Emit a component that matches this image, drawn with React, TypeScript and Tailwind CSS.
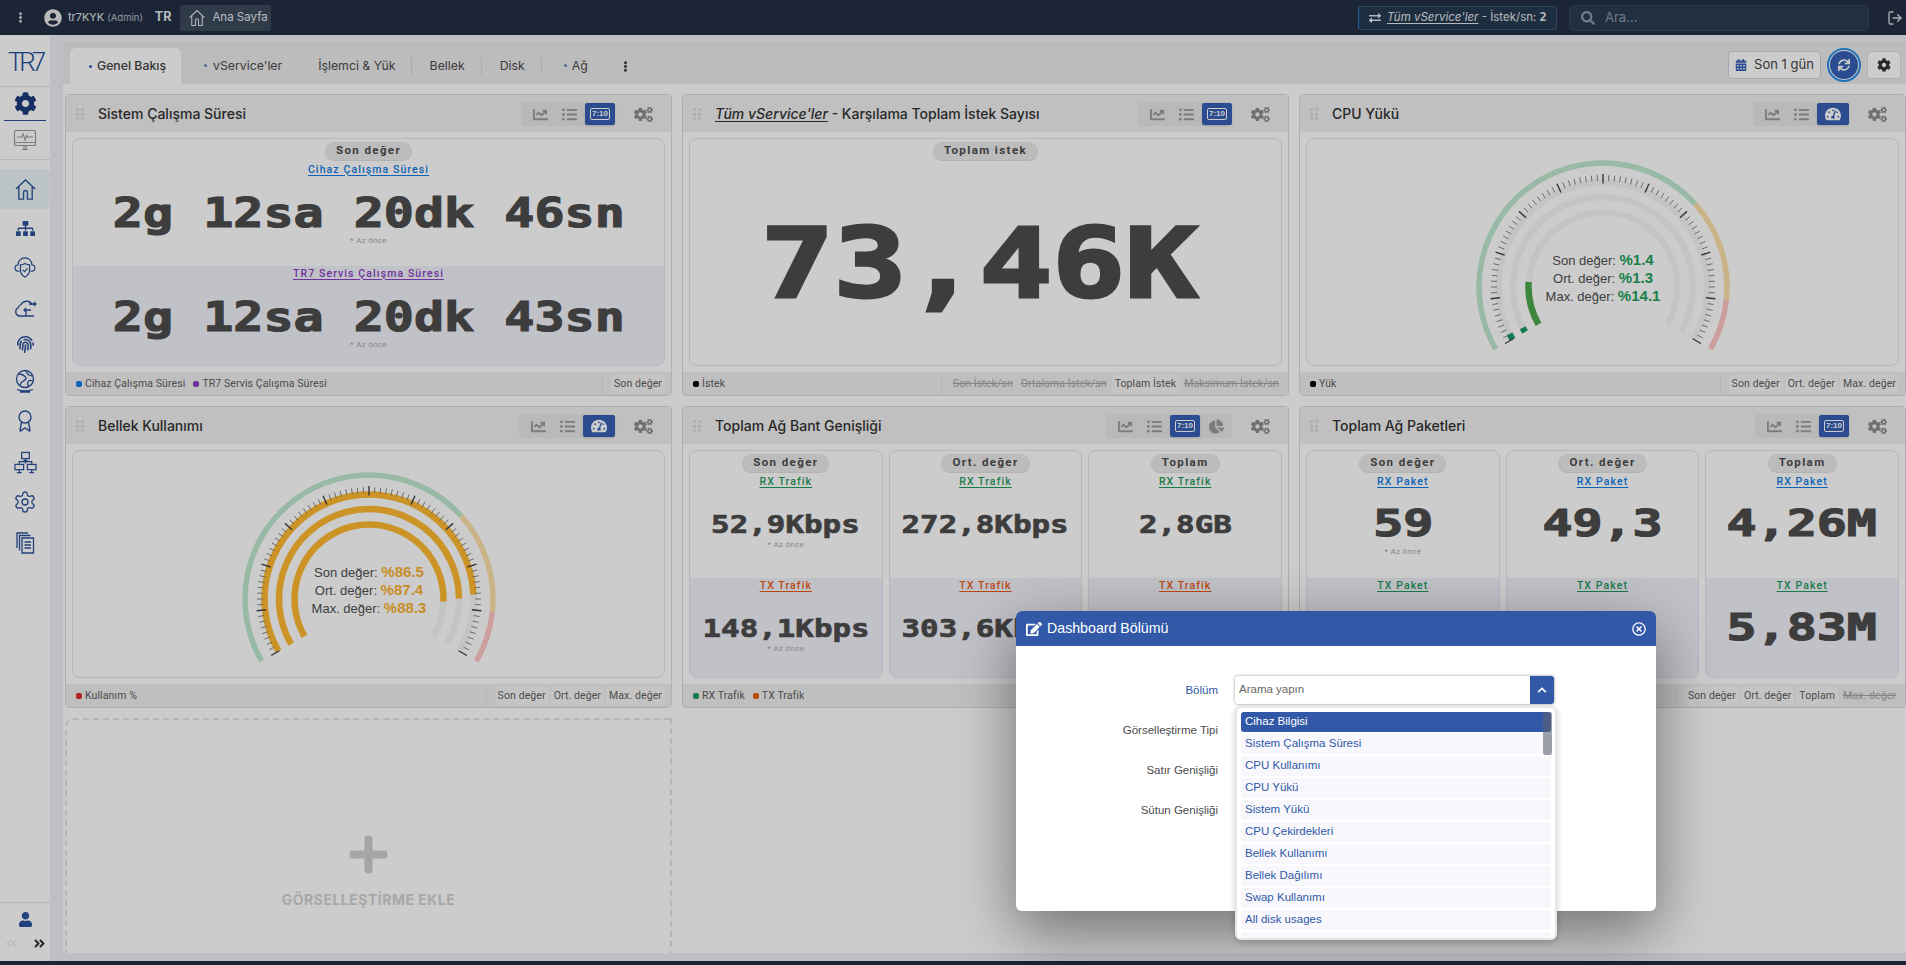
import type { ReactNode } from "react";
import {
  FaCalendarAlt,
  FaChartLine,
  FaChartPie,
  FaChevronUp,
  FaCog,
  FaCogs,
  FaEdit,
  FaEllipsisV,
  FaExchangeAlt,
  FaFingerprint,
  FaListUl,
  FaPlus,
  FaRegTimesCircle,
  FaSearch,
  FaSitemap,
  FaSync,
  FaTachometerAlt,
  FaUser,
  FaUserCircle,
  FaAngleDoubleRight,
  FaAngleDoubleLeft,
} from "react-icons/fa";
import { LuAward, LuLogOut, LuSettings } from "react-icons/lu";

const big = "font-['DejaVu_Sans_Mono'] font-bold text-[#4d4d4d] whitespace-nowrap";

function HomeIcon({ size, className }: { size: number; className: string }) {
  return (
    <svg viewBox="0 0 24 24" width={size} height={size} fill="none" stroke="currentColor" strokeWidth="1.4" className={className}>
      <path d="M2 11.5 12 2l10 9.5" />
      <path d="M5 9v13h5v-7a2 2 0 0 1 4 0v7h5V9" />
    </svg>
  );
}

function MonitorIcon() {
  return (
    <svg viewBox="0 0 24 24" width="24" height="24" fill="none" stroke="#9a9a9a" strokeWidth="1.1">
      <rect x="1.5" y="2.5" width="21" height="15" rx="1" />
      <path d="M1.5 14.5h21M9 21.5h6M11 17.5v4M13 17.5v4" />
      <path d="M4 9h5l1.2-3 2 6 1.6-4.5.9 1.5H20" />
    </svg>
  );
}

function ShieldCloudIcon() {
  return (
    <svg viewBox="0 0 24 24" width="22" height="22" fill="none" stroke="currentColor" strokeWidth="1.3">
      <path d="M6 15.5H5a3.5 3.5 0 0 1-.6-7A7.6 7.6 0 0 1 19.6 8.5a3.5 3.5 0 0 1-.6 7h-1" />
      <path d="M7 8.5c2 0 3.6-.6 5-1.5 1.4.9 3 1.5 5 1.5v6c0 3.6-2.4 6-5 7.5-2.6-1.500-5-3.900-5-7.500z" fill="#fff" />
      <path d="m9.500 14 2 2 3.300-3.500" />
    </svg>
  );
}

function CloudArrowIcon() {
  return (
    <svg viewBox="0 0 24 24" width="24" height="24" fill="none" stroke="currentColor" strokeWidth="1.300">
      <path d="M19.500 8A6.500 6.500 0 0 0 8 7.500a4 4 0 0 0-2.500 3A4.500 4.500 0 0 0 6 19h15" />
      <path d="M16 7h7M21 5l2 2-2 2M18 13h-7M13 11l-2 2 2 2M13 13v6" />
    </svg>
  );
}

function GlobeIcon() {
  return (
    <svg viewBox="0 0 24 24" width="24" height="24" fill="none" stroke="currentColor" strokeWidth="1.300">
      <circle cx="12" cy="10" r="8.500" />
      <path d="M5 5c4 0 7 2 8 4s-4 3-5 5-1 3-1 3M13 2c1 2 1 3 3 4s4 1 4 1M20 12c-2-1-4-1-5 1s0 4 1 4" />
      <path d="M4 20.500c2.500 1 5 1.500 8 1.500s5.500-.5 8-1.500M7 23h10" />
    </svg>
  );
}

function NetworkIcon() {
  return (
    <svg viewBox="0 0 24 24" width="23" height="23" fill="none" stroke="currentColor" strokeWidth="1.300">
      <rect x="8" y="1.500" width="8" height="6.500" />
      <path d="M10 10h4M12 8v5M5.500 13.500V11h13v2.500" />
      <rect x="1" y="14" width="9" height="5.500" />
      <rect x="14" y="14" width="9" height="5.500" />
      <path d="M3 22.500h5M16 22.500h5M5.500 19.500v3M18.500 19.500v3" />
    </svg>
  );
}

function PagesIcon() {
  return (
    <svg viewBox="0 0 24 24" width="24" height="24" fill="none" stroke="currentColor" strokeWidth="1.300">
      <path d="M4 18V3h11" />
      <path d="M6.500 20.500V5.500h11" />
      <path d="M9 8h11.500v15H9z" />
      <path d="M11.500 12h6.500M11.500 15h6.500M11.500 18h6.500" />
    </svg>
  );
}

function Clock710() {
  return (
    <span className="flex h-[12px] w-[20px] items-center justify-center rounded-[2px] border border-white font-['Liberation_Sans'] text-[8px] font-bold leading-none text-white">
      7:10
    </span>
  );
}

function Tools({ active, pie }: { active: "clock" | "gauge"; pie?: boolean }) {
  return (
    <div className="flex items-center">
      <div className="flex h-[24px] items-center rounded-[4px] bg-[#e8e8e8] pl-[6px]">
        <span className="flex w-[27px] justify-center text-[#9b9b9b]"><FaChartLine size={15} /></span>
        <span className="flex w-[31px] justify-center text-[#9b9b9b]"><FaListUl size={15} /></span>
        {active === "clock" ? (
          <span className="flex h-[22px] w-[30px] items-center justify-center rounded-[2px] bg-[#3660b4] shadow"><Clock710 /></span>
        ) : (
          <span className="flex h-[22px] w-[32px] items-center justify-center rounded-[2px] bg-[#3660b4] text-white shadow"><FaTachometerAlt size={16} /></span>
        )}
        {pie && <span className="flex w-[32px] justify-center text-[#9b9b9b]"><FaChartPie size={15} /></span>}
      </div>
      <span className="ml-[19px] mr-[18px] text-[#8d8d8d]"><FaCogs size={19} /></span>
    </div>
  );
}

function Grip() {
  return (
    <span className="grid w-[8px] grid-cols-2 gap-[1.500px]">
      {[0, 1, 2, 3, 4, 5].map((i) => (
        <i key={i} className="h-[3px] w-[3px] bg-[#dcdcdc]" />
      ))}
    </span>
  );
}

function Pill({ children }: { children: ReactNode }) {
  return (
    <span className="flex h-[18px] shrink-0 items-center justify-center rounded-full bg-[#ebebeb] px-[11px] font-['Roboto'] text-[11.500px] font-bold leading-none tracking-[1.400px] text-[#4d4d4d] shadow-[0_1px_0_#e0e0e0]">
      {children}
    </span>
  );
}

function Legend({ color, text }: { color: string; text: string }) {
  return (
    <span className="flex items-center gap-[3px]">
      <i className={`h-[6px] w-[6px] rounded-[2px] ${color}`} />
      <span>{text}</span>
    </span>
  );
}

function Panel({
  title,
  tools,
  legend,
  stats,
  children,
}: {
  title: ReactNode;
  tools: ReactNode;
  legend: ReactNode;
  stats: { t: string; off?: boolean }[];
  children: ReactNode;
}) {
  return (
    <section className="flex h-[302px] min-w-0 flex-col rounded-[4px] border border-[#dadada] bg-white">
      <header className="flex h-[37px] shrink-0 items-center justify-between bg-[#f0f0f0] pt-[1px]">
        <div className="flex items-center gap-[14px] pl-[10px] font-['Inter'] text-[14px] font-medium leading-none text-[#333]">
          <Grip />
          <span>{title}</span>
        </div>
        {tools}
      </header>
      <div className="min-h-0 flex-1 p-[6px]">{children}</div>
      <footer className="flex h-[23px] shrink-0 items-center justify-between bg-[#efefef] pt-[1px] font-['Roboto'] text-[10.500px] tracking-[0.100px] text-[#5f5f5f]">
        <div className="flex items-center gap-[8px] pl-[10px]">{legend}</div>
        <div className="flex h-full items-center gap-[2px] border-l border-[#e4e4e4] pl-[8px] pr-[6px]">
          {stats.map((s) => (
            <span key={s.t} className={`rounded-[3px] px-[3px] py-[2px] ${s.off ? "text-[#a5a5a5] line-through" : "bg-[#f5f5f5]"}`}>
              {s.t}
            </span>
          ))}
        </div>
      </footer>
    </section>
  );
}

function LinkTitle({ color, children }: { color: string; children: string }) {
  return (
    <span className={`flex h-[14px] items-center font-['Roboto'] text-[10.500px] font-medium leading-none tracking-[1.100px] underline underline-offset-[2px] ${color}`}>
      {children}
    </span>
  );
}

function Note({ className }: { className: string }) {
  return (
    <span className={`block h-[10px] font-['Roboto'] text-[8px] leading-[10px] tracking-[0.300px] text-[#a8a8a8] ${className}`}>* Az önce</span>
  );
}

function StatCard({
  pill,
  rx,
  rxColor,
  rxValue,
  tx,
  txColor,
  txValue,
  numClass,
  topNote,
  bottomNote,
  gap,
  noteGap,
}: {
  pill: string;
  rx: string;
  rxColor: string;
  rxValue: string;
  tx: string;
  txColor: string;
  txValue: string;
  numClass: string;
  topNote?: boolean;
  bottomNote?: boolean;
  gap: string;
  noteGap: string;
}) {
  return (
    <div className="flex h-full min-w-0 flex-1 flex-col overflow-hidden rounded-[8px] border border-[#e0e5ef]">
      <div className="flex h-[127px] shrink-0 flex-col items-center pt-[3px]">
        <Pill>{pill}</Pill>
        <span className="mt-[3px]"><LinkTitle color={rxColor}>{rx}</LinkTitle></span>
        <span className={`${big} ${numClass} ${gap}`}>{rxValue}</span>
        {topNote && <Note className={noteGap} />}
      </div>
      <div className="flex flex-1 flex-col items-center bg-[#f2f2fb] pt-[1px]">
        <LinkTitle color={txColor}>{tx}</LinkTitle>
        <span className={`${big} ${numClass} ${gap}`}>{txValue}</span>
        {bottomNote && <Note className={noteGap} />}
      </div>
    </div>
  );
}

function point(f: number, r: number, cx: number, cy: number) {
  const a = ((210 - 240 * f) * Math.PI) / 180;
  return [cx + r * Math.cos(a), cy - r * Math.sin(a)];
}

function arc(from: number, to: number, r: number, cx: number, cy: number) {
  const [x1, y1] = point(from, r, cx, cy);
  const [x2, y2] = point(to, r, cx, cy);
  const large = (to - from) * 240 > 180 ? 1 : 0;
  return `M${x1} ${y1}A${r} ${r} 0 ${large} 1 ${x2} ${y2}`;
}

function Gauge({
  values,
  colors,
  textColor,
}: {
  values: { label: string; value: number }[];
  colors: string[];
  textColor: string;
}) {
  const cx = 150;
  const cy = 148;
  const radii = [104.5, 90, 74.5];
  const ticks = Array.from({ length: 81 }, (_, i) => i);
  return (
    <div className="flex h-full justify-center rounded-[8px] border border-[#e0e5ef]">
      <svg width="300" height="226" viewBox="0 0 300 226">
        <path d={arc(0, 0.7, 124, cx, cy)} fill="none" stroke="#bde8cf" strokeWidth="5.500" />
        <path d={arc(0.7, 0.9, 124, cx, cy)} fill="none" stroke="#fde0a8" strokeWidth="5.500" />
        <path d={arc(0.9, 1, 124, cx, cy)} fill="none" stroke="#ffc6c6" strokeWidth="5.500" />
        {radii.map((r) => (
          <path key={r} d={arc(0, 1, r, cx, cy)} fill="none" stroke="#f6f6f6" strokeWidth="6.500" />
        ))}
        {values.map((v, i) => (
          <path key={v.label} d={arc(0, v.value / 100, radii[i], cx, cy)} fill="none" stroke={colors[i]} strokeWidth="6.500" />
        ))}
        {ticks.map((i) => {
          const major = i % 8 === 0;
          const [x1, y1] = point(i / 80, major ? 103.500 : 106, cx, cy);
          const [x2, y2] = point(i / 80, major ? 113 : 112, cx, cy);
          return <line key={i} x1={x1} y1={y1} x2={x2} y2={y2} stroke={major ? "#444" : "#777"} strokeWidth={major ? 1.400 : 0.900} />;
        })}
        {values.map((v, i) => (
          <text key={v.label} x={cx} y={cy - 22 + i * 18} textAnchor="middle" className="font-['Liberation_Sans'] text-[13px]" fill="#4f4f4f">
            {v.label}: <tspan className={`text-[15px] font-bold ${textColor}`}>%{v.value}</tspan>
          </text>
        ))}
      </svg>
    </div>
  );
}

const sideIcons: { h: string; icon: ReactNode }[] = [
  { h: "h-[38px]", icon: <FaSitemap size={19} /> },
  { h: "h-[42px]", icon: <ShieldCloudIcon /> },
  { h: "h-[40px]", icon: <CloudArrowIcon /> },
  { h: "h-[30px]", icon: <FaFingerprint size={17} /> },
  { h: "h-[44px]", icon: <GlobeIcon /> },
  { h: "h-[36px]", icon: <LuAward size={24} strokeWidth={1.400} /> },
  { h: "h-[46px]", icon: <NetworkIcon /> },
  { h: "h-[34px]", icon: <LuSettings size={24} strokeWidth={1.300} /> },
  { h: "h-[46px]", icon: <PagesIcon /> },
];

const options = [
  "Cihaz Bilgisi",
  "Sistem Çalışma Süresi",
  "CPU Kullanımı",
  "CPU Yükü",
  "Sistem Yükü",
  "CPU Çekirdekleri",
  "Bellek Kullanımı",
  "Bellek Dağılımı",
  "Swap Kullanımı",
  "All disk usages",
  "",
];

function Sidebar() {
  return (
    <aside className="flex w-[50px] shrink-0 flex-col bg-white text-[#2c5299]">
      <div className="flex h-[52px] shrink-0 items-center justify-center border-b border-[#e6e6e6] pt-[3px]">
        <span className="font-['Roboto'] text-[26px] font-light leading-none tracking-[-4px] text-[#1f4f9c]">TR7</span>
      </div>
      <div className="mx-[4px] flex h-[34px] shrink-0 items-center justify-center border-b border-[#2c5299] text-[#1c3d7c]">
        <FaCog size={23} />
      </div>
      <div className="flex h-[39px] shrink-0 items-center justify-center border-b border-[#e6e6e6]">
        <MonitorIcon />
      </div>
      <div className="mt-[9px] flex h-[40px] shrink-0 items-center justify-center rounded-r-[6px] bg-[#ebf5f8]">
        <HomeIcon size={23} className="text-[#2c5299]" />
      </div>
      <div className="flex flex-col items-center">
        {sideIcons.map((s, i) => (
          <span key={i} className={`flex items-center justify-center ${s.h}`}>{s.icon}</span>
        ))}
      </div>
      <div className="mt-auto flex h-[59px] flex-col border-t border-[#e6e6e6]">
        <span className="flex justify-center pt-[9px]"><FaUser size={15} /></span>
        <span className="mt-[10px] flex items-center justify-between pl-[5px] pr-[4px]">
          <span className="text-[#ededed]"><FaAngleDoubleLeft size={13} /></span>
          <span className="text-[#333]"><FaAngleDoubleRight size={13} /></span>
        </span>
      </div>
    </aside>
  );
}

function TabBar() {
  return (
    <div className="flex h-[41px] shrink-0 items-end border-t border-[#e4e4e4] bg-[#ebebec] pl-[7px] pr-[5px] font-['Inter'] text-[12.300px] leading-none text-[#4a4a4a]">
      <div className="flex h-[36px] w-[111px] items-center justify-center gap-[5px] rounded-t-[6px] bg-white pl-[4px] font-medium text-[#444]">
        <i className="h-[3px] w-[3px] rounded-full bg-[#3660b4]" />
        Genel Bakış
      </div>
      <div className="flex h-[36px] items-center">
        <span className="ml-[23px] flex items-center gap-[6px]"><i className="h-[3px] w-[3px] rounded-full bg-[#6d86bd]" />vService'ler</span>
        <span className="ml-[36px]">İşlemci &amp; Yük</span>
        <span className="ml-[15px] mr-[18px] h-[18px] w-px bg-[#d6d6d6]" />
        <span>Bellek</span>
        <span className="ml-[16px] mr-[18px] h-[18px] w-px bg-[#d6d6d6]" />
        <span>Disk</span>
        <span className="mx-[16px] h-[18px] w-px bg-[#d6d6d6]" />
        <span className="ml-[6px] flex items-center gap-[5px]"><i className="h-[3px] w-[3px] rounded-full bg-[#6d86bd]" />Ağ</span>
        <span className="ml-[32px] text-[#444]"><FaEllipsisV size={11} /></span>
      </div>
      <div className="ml-auto flex h-full items-center gap-[6px] pt-[1px]">
        <span className="flex h-[28px] w-[93px] items-center justify-center gap-[7px] rounded-[4px] border border-[#cfd3dc] bg-white text-[13px] text-[#444]">
          <span className="text-[#3660b4]"><FaCalendarAlt size={12} /></span>Son 1 gün
        </span>
        <span className="flex h-[34px] w-[34px] items-center justify-center rounded-full border-[2px] border-[#2a8fe8] bg-white p-[1px]">
          <span className="flex h-full w-full items-center justify-center rounded-full bg-[#3660b4] text-white"><FaSync size={12} /></span>
        </span>
        <span className="flex h-[28px] w-[34px] items-center justify-center rounded-[4px] border border-[#dcdcdc] bg-white text-[#333]"><FaCog size={14} /></span>
      </div>
    </div>
  );
}

function Dashboard() {
  const threeCards = "flex h-full gap-[6px]";
  const uptimeNum = "mt-[16px] h-[40px] text-[41px] leading-[40px] scale-x-[1.22] [-webkit-text-stroke:1.200px_#4d4d4d]";
  const bwNum = "h-[24px] text-[25.500px] leading-[24px] scale-x-[1.21] [-webkit-text-stroke:0.700px_#4d4d4d]";
  const pktNum = "h-[30px] text-[37px] leading-[30px] scale-x-[1.35] [-webkit-text-stroke:1.200px_#4d4d4d]";
  return (
    <div className="grid grid-cols-3 gap-[10px] pl-[2px] pt-[10px]">
      <Panel
        title="Sistem Çalışma Süresi"
        tools={<Tools active="clock" />}
        legend={
          <>
            <Legend color="bg-[#0f7ce6]" text="Cihaz Çalışma Süresi" />
            <Legend color="bg-[#8a3fc4]" text="TR7 Servis Çalışma Süresi" />
          </>
        }
        stats={[{ t: "Son değer" }]}
      >
        <div className="flex h-full flex-col overflow-hidden rounded-[8px] border border-[#e0e5ef]">
          <div className="flex h-[127px] shrink-0 flex-col items-center pt-[3px]">
            <Pill>Son değer</Pill>
            <span className="mt-[3px]"><LinkTitle color="text-[#0f7ce6]">Cihaz Çalışma Süresi</LinkTitle></span>
            <span className={`${big} ${uptimeNum}`}>2g 12sa 20dk 46sn</span>
            <Note className="mt-[3px]" />
          </div>
          <div className="flex flex-1 flex-col items-center bg-[#f2f2fb] pt-[1px]">
            <LinkTitle color="text-[#8a3fc4]">TR7 Servis Çalışma Süresi</LinkTitle>
            <span className={`${big} ${uptimeNum}`}>2g 12sa 20dk 43sn</span>
            <Note className="mt-[3px]" />
          </div>
        </div>
      </Panel>
      <Panel
        title={
          <>
            <em className="underline underline-offset-2">Tüm vService'ler</em> - Karşılama Toplam İstek Sayısı
          </>
        }
        tools={<Tools active="clock" />}
        legend={<Legend color="bg-black" text="İstek" />}
        stats={[{ t: "Son İstek/sn", off: true }, { t: "Ortalama İstek/sn", off: true }, { t: "Toplam İstek" }, { t: "Maksimum İstek/sn", off: true }]}
      >
        <div className="flex h-full flex-col items-center rounded-[8px] border border-[#e0e5ef] pt-[3px]">
          <Pill>Toplam istek</Pill>
          <span className={`${big} mr-[12px] mt-[49px] h-[110px] scale-x-[1.26] text-[96px] leading-[110px] [-webkit-text-stroke:3px_#4d4d4d]`}>73,46K</span>
        </div>
      </Panel>
      <Panel
        title="CPU Yükü"
        tools={<Tools active="gauge" />}
        legend={<Legend color="bg-black" text="Yük" />}
        stats={[{ t: "Son değer" }, { t: "Ort. değer" }, { t: "Max. değer" }]}
      >
        <Gauge
          values={[{ label: "Son değer", value: 1.4 }, { label: "Ort. değer", value: 1.3 }, { label: "Max. değer", value: 14.1 }]}
          colors={["#149b64", "#149b64", "#4ba94b"]}
          textColor="fill-[#22a05c]"
        />
      </Panel>

      <Panel
        title="Bellek Kullanımı"
        tools={<Tools active="gauge" />}
        legend={<Legend color="bg-[#e02c2c]" text="Kullanım %" />}
        stats={[{ t: "Son değer" }, { t: "Ort. değer" }, { t: "Max. değer" }]}
      >
        <Gauge
          values={[{ label: "Son değer", value: 86.5 }, { label: "Ort. değer", value: 87.4 }, { label: "Max. değer", value: 88.3 }]}
          colors={["#ffba30", "#ffba30", "#ffba30"]}
          textColor="fill-[#fbb333]"
        />
      </Panel>
      <Panel
        title="Toplam Ağ Bant Genişliği"
        tools={<Tools active="clock" pie />}
        legend={
          <>
            <Legend color="bg-[#1f9a5c]" text="RX Trafik" />
            <Legend color="bg-[#ea5a12]" text="TX Trafik" />
          </>
        }
        stats={[{ t: "Son değer" }, { t: "Ort. değer" }, { t: "Toplam" }]}
      >
        <div className={threeCards}>
          <StatCard pill="Son değer" rx="RX Trafik" rxColor="text-[#1f9a5c]" rxValue="52,9Kbps" tx="TX Trafik" txColor="text-[#ea5a12]" txValue="148,1Kbps" numClass={bwNum} gap="mt-[23px]" noteGap="mt-[4px]" topNote bottomNote />
          <StatCard pill="Ort. değer" rx="RX Trafik" rxColor="text-[#1f9a5c]" rxValue="272,8Kbps" tx="TX Trafik" txColor="text-[#ea5a12]" txValue="303,6Kbps" numClass={bwNum} gap="mt-[23px]" noteGap="mt-[4px]" />
          <StatCard pill="Toplam" rx="RX Trafik" rxColor="text-[#1f9a5c]" rxValue="2,8GB" tx="TX Trafik" txColor="text-[#ea5a12]" txValue="" numClass={bwNum} gap="mt-[23px]" noteGap="mt-[4px]" />
        </div>
      </Panel>
      <Panel
        title="Toplam Ağ Paketleri"
        tools={<Tools active="clock" />}
        legend={
          <>
            <Legend color="bg-[#0f7ce6]" text="RX Paket" />
            <Legend color="bg-[#1f9a5c]" text="TX Paket" />
          </>
        }
        stats={[{ t: "Son değer" }, { t: "Ort. değer" }, { t: "Toplam" }, { t: "Max. değer", off: true }]}
      >
        <div className={threeCards}>
          <StatCard pill="Son değer" rx="RX Paket" rxColor="text-[#0f7ce6]" rxValue="59" tx="TX Paket" txColor="text-[#1f9a5c]" txValue="" numClass={pktNum} gap="mt-[20px]" noteGap="mt-[8px]" topNote />
          <StatCard pill="Ort. değer" rx="RX Paket" rxColor="text-[#0f7ce6]" rxValue="49,3" tx="TX Paket" txColor="text-[#1f9a5c]" txValue="" numClass={pktNum} gap="mt-[20px]" noteGap="mt-[8px]" />
          <StatCard pill="Toplam" rx="RX Paket" rxColor="text-[#0f7ce6]" rxValue="4,26M" tx="TX Paket" txColor="text-[#1f9a5c]" txValue="5,83M" numClass={pktNum} gap="mt-[20px]" noteGap="mt-[8px]" />
        </div>
      </Panel>

      <div className="flex h-[300px] flex-col items-center rounded-tl-[8px] border-2 border-dashed border-[#e4e4e4] pt-[113px]">
        <span className="text-[#cfcfcf]"><FaPlus size={43} /></span>
        <span className="mt-[17px] font-['Inter'] text-[14px] font-bold leading-none tracking-[0.500px] text-[#d2d2d2]">GÖRSELLEŞTİRME EKLE</span>
      </div>
    </div>
  );
}

function Modal() {
  return (
    <div className="absolute left-[1016px] top-[611px] h-[300px] w-[640px] rounded-[6px] bg-white shadow-[0_20px_60px_rgba(0,0,0,0.45)]">
      <div className="flex h-[35px] items-center justify-between rounded-t-[6px] bg-[#3159a8] pl-[10px] pr-[10px] font-['Liberation_Sans'] text-[14.200px] leading-none text-white">
        <span className="flex items-center gap-[5px]"><FaEdit size={16} />Dashboard Bölümü</span>
        <FaRegTimesCircle size={14} />
      </div>
      <div className="flex w-[202px] flex-col items-end gap-[26px] pt-[37px] font-['Liberation_Sans'] text-[11.500px] leading-[14px] text-[#4b4b4b]">
        <span className="text-[#3159a8]">Bölüm</span>
        <span>Görselleştirme Tipi</span>
        <span>Satır Genişliği</span>
        <span>Sütun Genişliği</span>
      </div>
      <div className="absolute left-[219px] top-[65px] flex h-[28px] w-[319px] items-center justify-between rounded-[3px] bg-white pl-[4px] font-['Liberation_Sans'] text-[11.500px] text-[#666] shadow-[0_0_3px_rgba(0,0,0,0.45)]">
        Arama yapın
        <span className="flex h-full w-[24px] items-center justify-center rounded-r-[3px] bg-[#3159a8] text-white"><FaChevronUp size={10} /></span>
      </div>
      <div className="absolute left-[219px] top-[95px] h-[234px] w-[322px] overflow-hidden rounded-[6px] border-2 border-[#e6e6e6] bg-white px-[4px] pt-[4px] shadow-[0_2px_6px_rgba(0,0,0,0.2)]">
        <div className="flex flex-col gap-[2px]">
          {options.map((o, i) => (
            <div key={i} className={`flex h-[20px] shrink-0 items-center rounded-[3px] pl-[4px] font-['Liberation_Sans'] text-[11.500px] leading-none ${i === 0 ? "bg-[#3159a8] font-medium text-white" : "bg-[#f8f8fc] text-[#3159a8]"}`}>
              {o}
            </div>
          ))}
        </div>
        <span className="absolute right-[3px] top-[4px] h-[43px] w-[9px] rounded-[2px] bg-[#5b6272]/60" />
      </div>
    </div>
  );
}

export default function App() {
  return (
    <div className="relative flex h-[965px] w-full flex-col overflow-hidden bg-white">
      <div className="flex h-[35px] shrink-0 items-center bg-[#222f43] font-['Inter'] text-[11px] leading-none text-[#e2e6ec]">
        <span className="ml-[15px] text-[#c8ccd2]"><FaEllipsisV size={11} /></span>
        <span className="ml-[18px] text-[#e8e8e8]"><FaUserCircle size={18} /></span>
        <span className="ml-[6px]">tr7KYK <span className="text-[9.500px] text-[#b9c0ca]">(Admin)</span></span>
        <span className="ml-[12px] text-[12.500px] font-bold">TR</span>
        <span className="ml-[9px] flex h-[26px] w-[91px] items-center gap-[6px] rounded-[3px] bg-[#3d4a5c] pl-[8px] text-[11.500px]">
          <HomeIcon size={18} className="text-[#e2e6ec]" />Ana Sayfa
        </span>
        <span className="ml-auto flex h-[24px] w-[199px] items-center gap-[6px] rounded-[3px] border border-[#3a5576] border-l-[#2a78c8] bg-[#263a52] pl-[10px] text-[11.500px]">
          <FaExchangeAlt size={12} />
          <span className="whitespace-nowrap"><em className="underline underline-offset-2">Tüm vService'ler</em> - İstek/sn: <b className="font-['DejaVu_Sans_Mono'] text-[12px]">2</b></span>
        </span>
        <span className="ml-[12px] flex h-[26px] w-[300px] items-center gap-[10px] rounded-[4px] border border-[#33465e] bg-[#2a3b50] pl-[11px] text-[13px] text-[#8e99a8]">
          <FaSearch size={14} />Ara...
        </span>
        <span className="ml-[18px] mr-[3px] text-[#d8dde4]"><LuLogOut size={16} /></span>
      </div>
      <div className="flex min-h-0 flex-1">
        <Sidebar />
        <main className="min-w-0 flex-1 bg-[#eeeef5] pb-[8px] pl-[13px] pt-[8px]">
          <div className="flex h-full flex-col overflow-hidden rounded-tl-[4px] bg-white">
            <TabBar />
            <Dashboard />
          </div>
        </main>
      </div>
      <div className="h-[4px] shrink-0 bg-[#222f43]" />
      <div className="absolute inset-0 bg-black/20" />
      <Modal />
    </div>
  );
}
